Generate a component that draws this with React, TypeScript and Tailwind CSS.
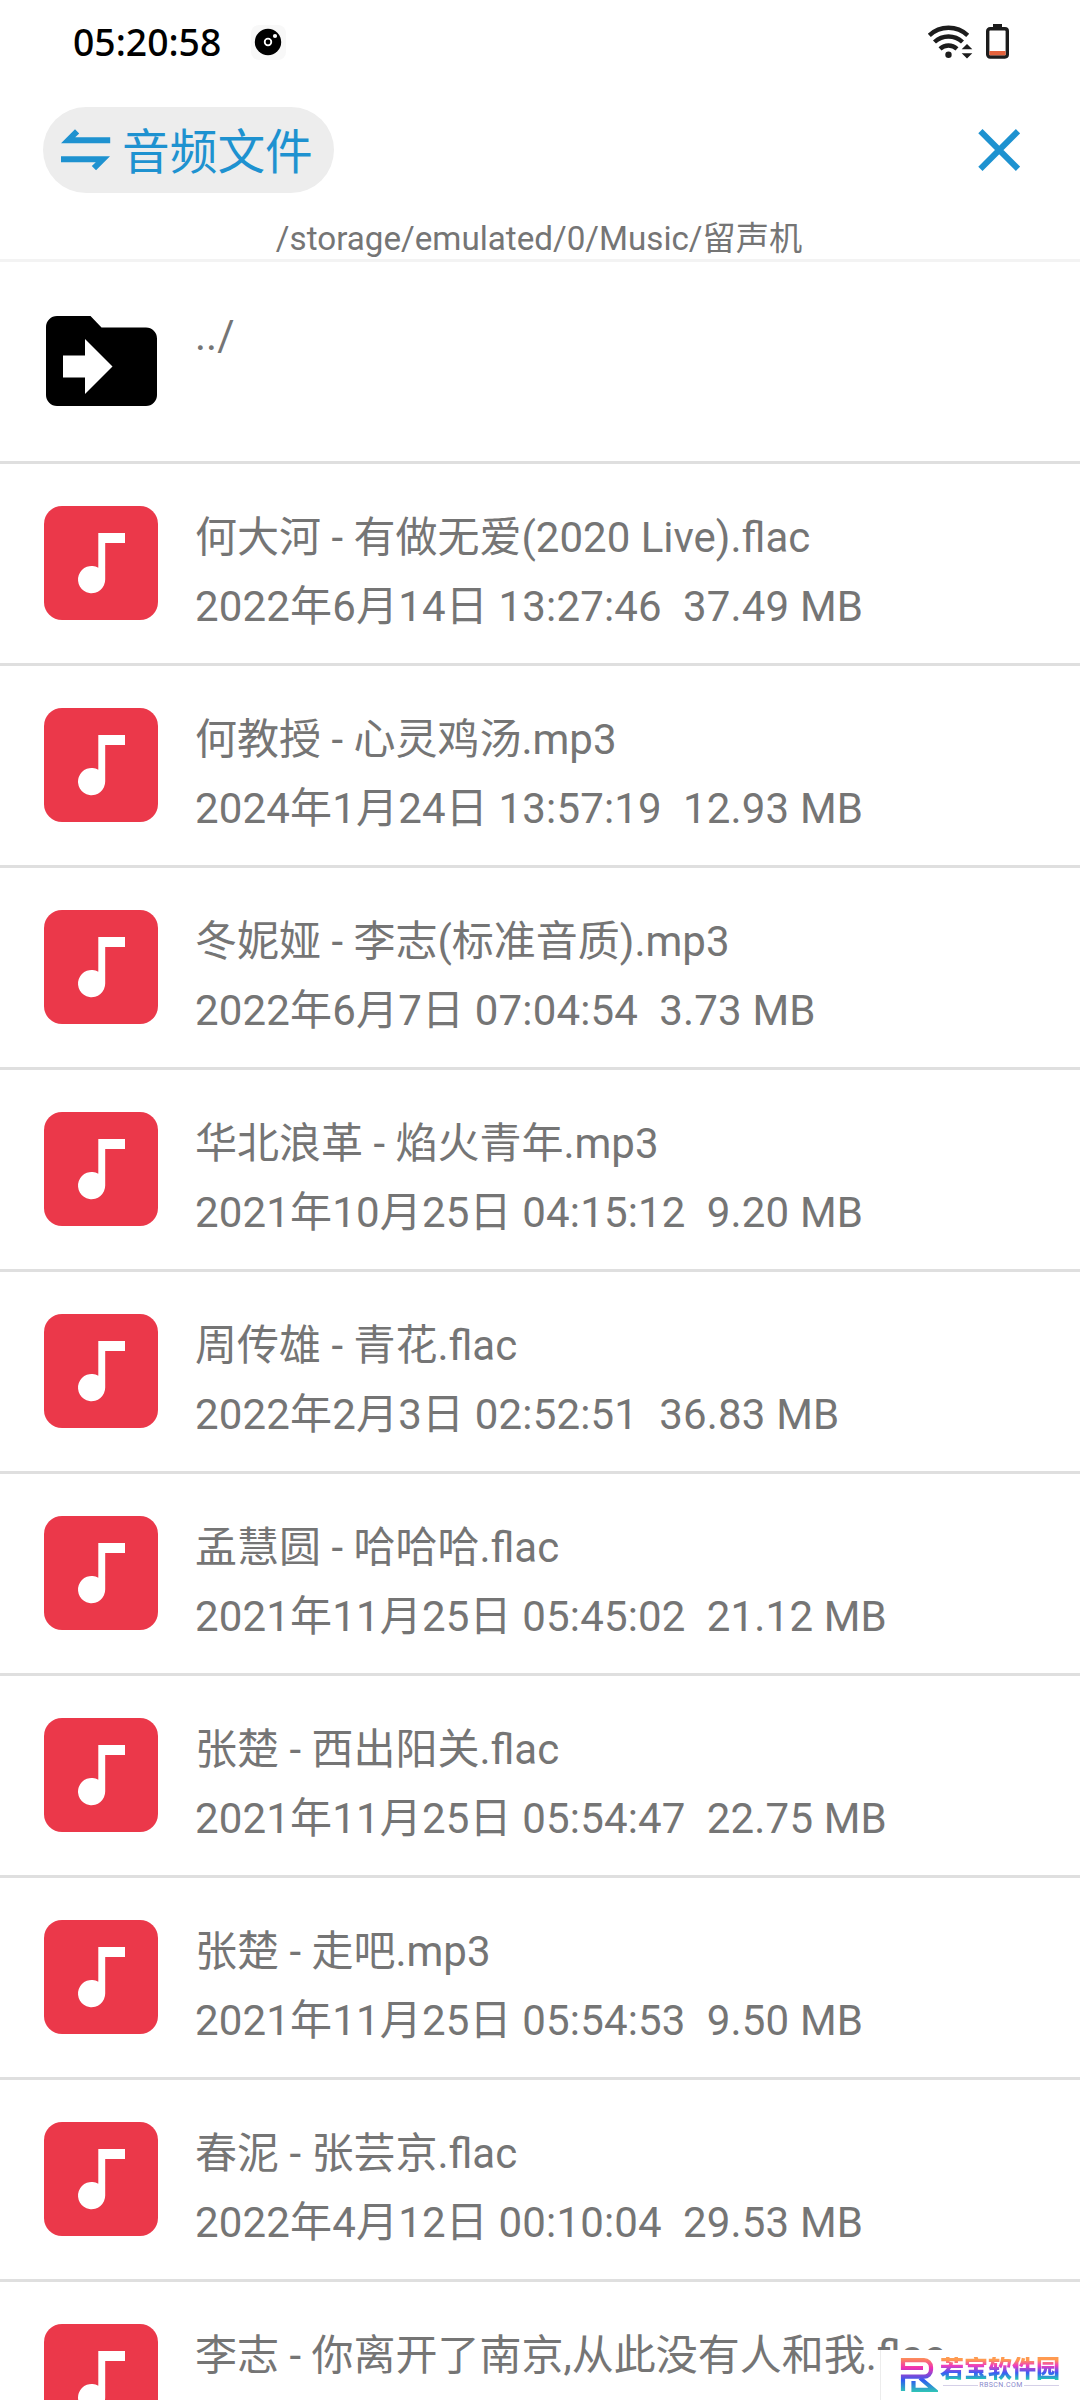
import React from 'react';

interface AudioFile {
  name: string;
  date?: string;
  size?: string;
}

const FILES: AudioFile[] = [
  { name: '何大河 - 有做无爱(2020 Live).flac', date: '2022年6月14日 13:27:46', size: '37.49 MB' },
  { name: '何教授 - 心灵鸡汤.mp3', date: '2024年1月24日 13:57:19', size: '12.93 MB' },
  { name: '冬妮娅 - 李志(标准音质).mp3', date: '2022年6月7日 07:04:54', size: '3.73 MB' },
  { name: '华北浪革 - 焰火青年.mp3', date: '2021年10月25日 04:15:12', size: '9.20 MB' },
  { name: '周传雄 - 青花.flac', date: '2022年2月3日 02:52:51', size: '36.83 MB' },
  { name: '孟慧圆 - 哈哈哈.flac', date: '2021年11月25日 05:45:02', size: '21.12 MB' },
  { name: '张楚 - 西出阳关.flac', date: '2021年11月25日 05:54:47', size: '22.75 MB' },
  { name: '张楚 - 走吧.mp3', date: '2021年11月25日 05:54:53', size: '9.50 MB' },
  { name: '春泥 - 张芸京.flac', date: '2022年4月12日 00:10:04', size: '29.53 MB' },
  { name: '李志 - 你离开了南京,从此没有人和我.flac' },
];

const DiscIcon = () => (
  <svg className="ml-[30px] h-[35px] w-[35px]" viewBox="0 0 35 35">
    <rect width="35" height="35" rx="8" fill="#f8f8f8" />
    <circle cx="17" cy="17" r="13.2" fill="#000" />
    <circle cx="17" cy="17" r="3.3" fill="none" stroke="#fff" strokeWidth="1.8" />
    <circle cx="24" cy="11" r="2.1" fill="#fff" />
  </svg>
);

const WifiIcon = () => (
  <svg className="-mt-[2px] h-[36px] w-[46px]" viewBox="0 0 46 36" fill="none" stroke="#1c1c1c" strokeWidth="4.4">
    <path d="M2.3 11.4a28 28 0 0 1 38.4 0" />
    <path d="M7.5 18a20.5 20.5 0 0 1 28 0" />
    <path d="M13 24.8a12.8 12.8 0 0 1 17 0" />
    <circle cx="21.5" cy="30.8" r="3.2" fill="#1c1c1c" stroke="none" />
    <path d="M34.7 25.2l5.3-5.3 5.3 5.3zM34.7 29.2l5.3 5.3 5.3-5.3z" fill="#1c1c1c" stroke="none" />
  </svg>
);

const BatteryIcon = () => (
  <svg className="-mt-[2px] ml-[13px] h-[35px] w-[23px]" viewBox="0 0 23 35">
    <path d="M7 0h9v4H7z" fill="#1c1c1c" />
    <rect x="1.7" y="4.7" width="19.6" height="28.3" rx="2.4" fill="#fff" stroke="#1c1c1c" strokeWidth="3.4" />
    <path d="M3.4 27h16.2v4.3H3.4z" fill="#e4623c" />
  </svg>
);

const SwapIcon = () => (
  <svg className="h-[42px] w-[50px]" viewBox="0 0 50 42" fill="#1e92d0">
    <path d="M0 14.3L14 0.3l4.2 4.2-4 3.8h35v6zM49 27.3l-14 14-4.2-4.2 4-3.8H0v-6z" />
  </svg>
);

const CloseIcon = () => (
  <svg className="h-[42px] w-[42px]" viewBox="0 0 42 42" stroke="#1e92d0" strokeWidth="6">
    <path d="M2.4 2.2L40 39.8M40 2.2L2.4 39.8" />
  </svg>
);

const FolderIcon = () => (
  <svg className="h-[90px] w-[111px]" viewBox="0 0 111 90">
    <path d="M11 0h33.5l11 11.5H100a11 11 0 0 1 11 11V79a11 11 0 0 1-11 11H11A11 11 0 0 1 0 79V11A11 11 0 0 1 11 0z" fill="#000" />
    <path d="M17 39.5h22V23l27.5 27.5L39 78V61.5H17z" fill="#fff" />
  </svg>
);

const MusicIcon = () => (
  <svg className="h-[114px] w-[114px]" viewBox="0 0 114 114">
    <rect width="114" height="114" rx="18" fill="#eb384a" />
    <path d="M54.3 27H81v10H61.2v36.5a13.6 13.6 0 1 1-6.9-11.8z" fill="#fff" />
  </svg>
);

const Watermark = () => (
  <div className="absolute bottom-0 right-0 flex h-[50px] w-[200px] border-l border-[#ececec] bg-white pl-[19px] pt-[7px]">
    <svg className="h-[36px] w-[38px]" viewBox="0 0 38 36" fill="none" strokeWidth="4.2">
      <defs>
        <linearGradient id="logo" x1="0" y1="0" x2="0" y2="36" gradientUnits="userSpaceOnUse">
          <stop offset="0" stopColor="#ff9a4c" />
          <stop offset="0.3" stopColor="#f02fb4" />
          <stop offset="0.65" stopColor="#2f5cf0" />
          <stop offset="1" stopColor="#2fd0b0" />
        </linearGradient>
      </defs>
      <path d="M23 11H3V3.2H24a7 7 0 0 1 7 7v2.5a7 7 0 0 1-7 7H3V34" stroke="url(#logo)" />
      <path d="M20 21l14 11.8H13.5V24" stroke="url(#logo)" />
    </svg>
    <div className="ml-[2px] flex w-[119px] flex-col">
      <div className="bg-[linear-gradient(180deg,#ff9a50_12%,#f03cc0_36%,#3a5cf5_66%,#20d0b0_95%)] bg-clip-text text-[24px] font-black leading-[24px] whitespace-nowrap text-transparent">若宝软件园</div>
      <div className="flex items-center gap-px pl-[3px] text-[7px] leading-[8px] tracking-[0.4px] text-[#8a88cc]">
        <span className="h-px flex-1 bg-[#d5d0e8]" />
        RBSCN.COM
        <span className="h-px flex-1 bg-[#d5d0e8]" />
      </div>
    </div>
  </div>
);

const FileRow: React.FC<{ file: AudioFile }> = ({ file }) => (
  <li className="flex h-[202px] items-start border-b-[3px] border-[#dfdfdf] pl-[44px]">
    <div className="pt-[42px]">
      <MusicIcon />
    </div>
    <div className="ml-[37px] pt-[39px] text-[42px] leading-[69px] whitespace-pre">
      <div>{file.name}</div>
      {file.date && <div className="tracking-[0.17px]">{file.date}  {file.size}</div>}
    </div>
  </li>
);

const App: React.FC = () => {
  return (
    <div className="relative h-[2400px] w-[1080px] overflow-hidden bg-white font-['Roboto','Noto_Sans_CJK_SC',sans-serif] text-[#757575]">
      <div className="flex h-[85px] items-center pl-[73px] pr-[71px] text-black">
        <span className="-mt-[2px] font-['Noto_Sans',sans-serif] text-[37.3px] font-medium leading-none">05:20:58</span>
        <DiscIcon />
        <div className="ml-auto flex items-center">
          <WifiIcon />
          <BatteryIcon />
        </div>
      </div>

      <header className="flex h-[130px] items-center justify-between pl-[43px] pr-[60px]">
        <button className="flex h-[86px] w-[291px] items-center rounded-full bg-[#ededed] pl-[18px] text-[#1e92d0]">
          <SwapIcon />
          <span className="ml-[11px] pt-[8px] text-[47.7px] leading-none whitespace-nowrap">音频文件</span>
        </button>
        <button>
          <CloseIcon />
        </button>
      </header>

      <div className="h-[47px] border-b-[3px] border-[#f3f3f3] pr-[2px] text-center text-[33.2px] leading-[47px]">/storage/emulated/0/Music/留声机</div>

      <ul>
        <li className="flex h-[202px] items-start border-b-[3px] border-[#dfdfdf] pl-[45.5px]">
          <div className="pt-[54px]">
            <FolderIcon />
          </div>
          <div className="ml-[38.5px] pt-[39px] text-[42px] leading-[69px]">../</div>
        </li>
        {FILES.map((f) => (
          <FileRow key={f.name} file={f} />
        ))}
      </ul>

      <Watermark />
    </div>
  );
};

export default App;
